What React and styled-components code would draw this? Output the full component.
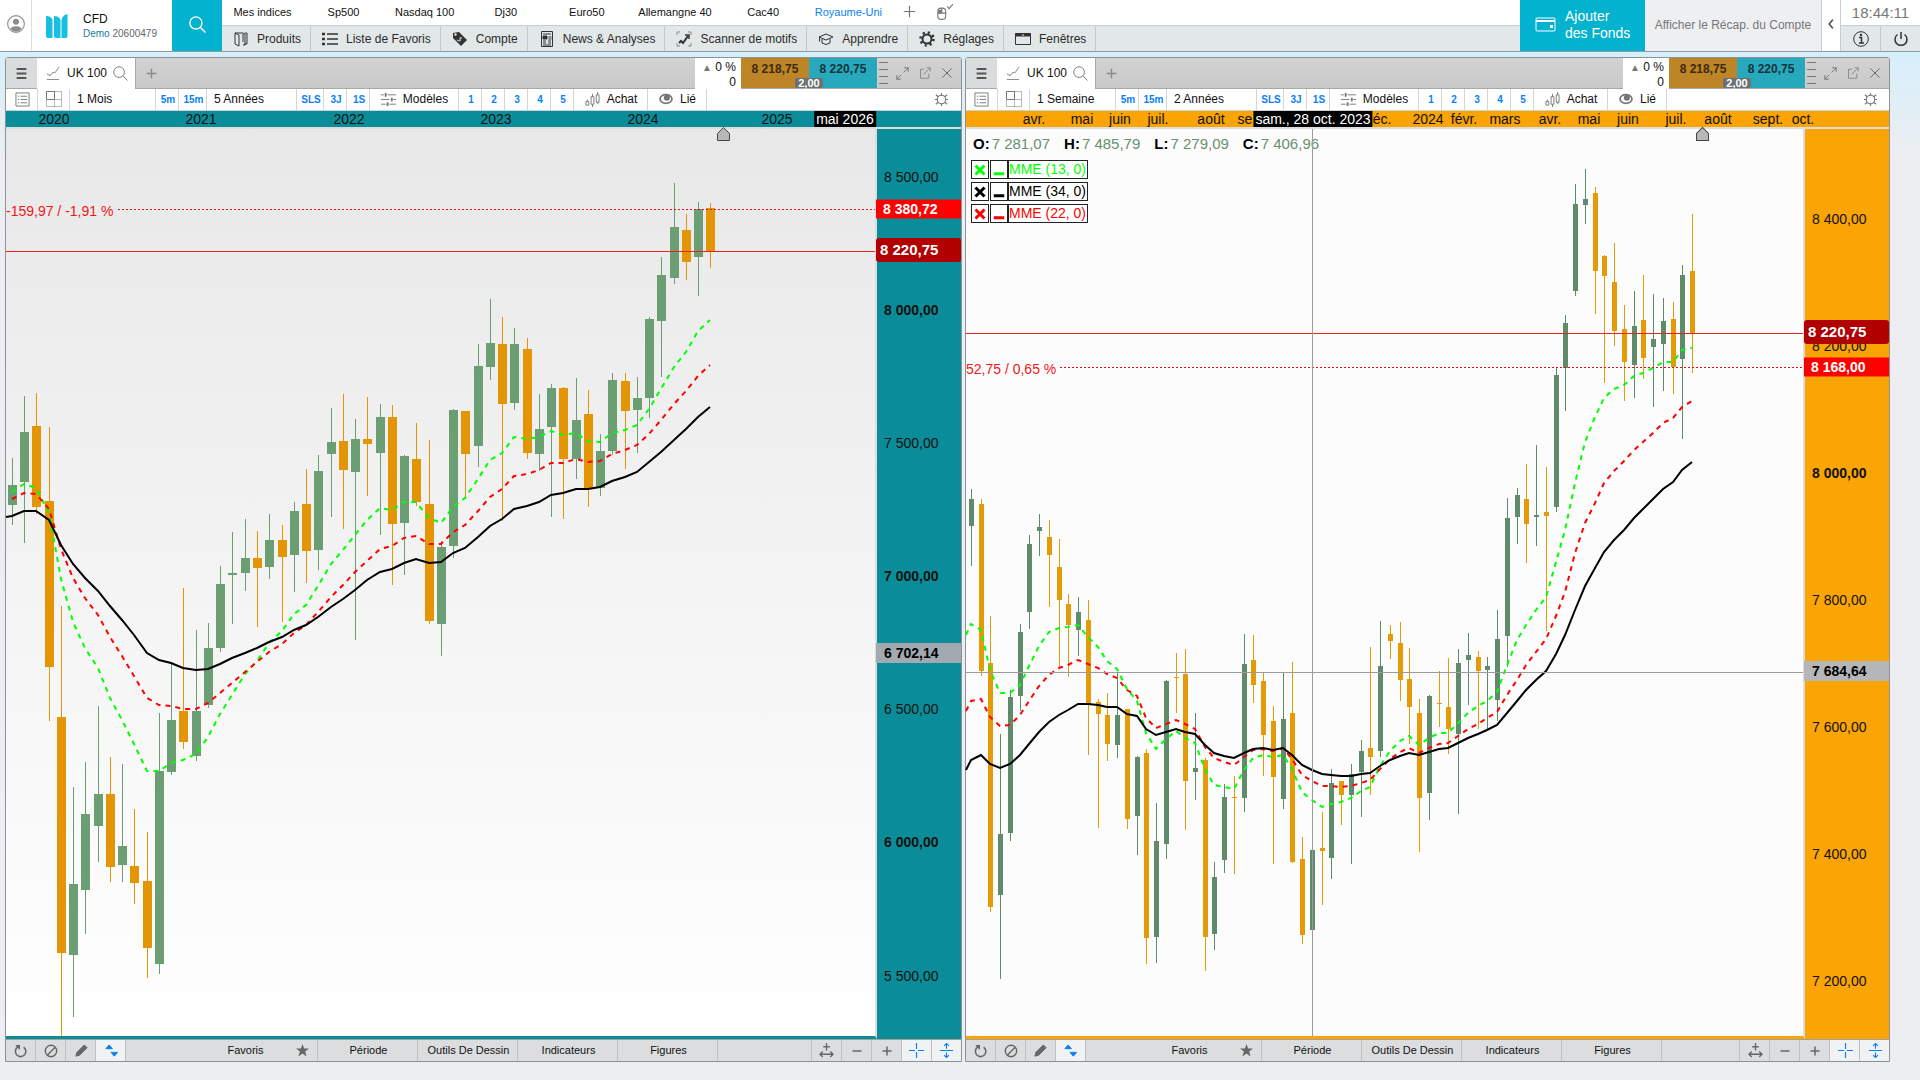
import React from 'react';
import styled, { createGlobalStyle } from 'styled-components';

const GlobalStyle = createGlobalStyle`
  * {
    box-sizing: border-box;
  }

  body {
    margin: 0;
    font-family: 'Liberation Sans', Arial, sans-serif;
    font-size: 12px;
    color: #111;
    background: #edeef1;
  }

  button {
    margin: 0;
    padding: 0;
    border: 0;
    background: none;
    font: inherit;
    color: inherit;
    cursor: pointer;
  }

  svg {
    display: block;
    flex: none;
  }
`;

const Page = styled.div`
  display: flex;
  flex-direction: column;
  min-height: 100vh;
  background: linear-gradient(#d6effa 50px, #edeef1 160px);
`;

/* header */

const Header = styled.header`
  display: flex;
  height: 52px;
  background: white;
  border-bottom: 1px solid #8f9aa3;
`;

const ProfileButton = styled.button`
  width: 32px;
  display: flex;
  align-items: center;
  justify-content: center;
  padding-bottom: 3px;
  border-right: 1px solid #ddd;
`;

const Brand = styled.div`
  width: 140px;
  display: flex;
  align-items: center;
  gap: 15px;
  padding-left: 14px;
`;

const AccountName = styled.div`
  line-height: 16px;

  small {
    display: block;
    font-size: 10px;
    line-height: 14px;
    color: #666;
  }

  em {
    font-style: normal;
    color: #16809a;
  }
`;

const SearchButton = styled.button`
  width: 50px;
  display: flex;
  align-items: center;
  justify-content: center;
  padding-bottom: 3px;
  background: #03b2ce;
`;

const Menus = styled.div`
  flex: 1;
  min-width: 0;
  display: flex;
  flex-direction: column;
`;

const QuickLinks = styled.nav`
  height: 26px;
  display: flex;
  align-items: center;
  padding-bottom: 2px;
  border-bottom: 1px solid #c9cccd;
`;

const QuickLink = styled.a`
  min-width: 81px;
  padding: 0 11px;
  font-size: 11px;
  text-align: center;
  white-space: nowrap;
  text-decoration: none;
  color: ${(props) => (props.$active ? '#0a7ff5' : '#111')};
`;

const QuickButton = styled.button`
  width: 34px;
  display: flex;
  justify-content: center;
`;

const MainMenu = styled.nav`
  flex: 1;
  display: flex;
  background: #e2e8e8;
`;

const MenuItem = styled.button`
  display: flex;
  align-items: center;
  gap: 8px;
  padding: 0 9px 0 11px;
  border-right: 1px solid #c3c8c9;
  white-space: nowrap;
  color: #2b2b2b;
`;

const FundsButton = styled.button`
  width: 125px;
  display: flex;
  align-items: center;
  gap: 9px;
  padding: 0 0 1px 15px;
  background: #03b2ce;
  color: white;
  font-size: 14px;
  line-height: 17px;
  text-align: left;
`;

const SummaryButton = styled.button`
  width: 176px;
  padding-bottom: 2px;
  background: #eeeff1;
  color: #777;
  white-space: nowrap;
`;

const CollapseButton = styled.button`
  width: 20px;
  display: flex;
  align-items: center;
  justify-content: center;
  padding-bottom: 3px;
  border-left: 1px solid #ccc;
  border-right: 1px solid #ccc;
`;

const ClockBlock = styled.div`
  width: 79px;
  display: flex;
  flex-direction: column;
`;

const Clock = styled.time`
  height: 26px;
  font-size: 15px;
  line-height: 26px;
  text-align: center;
  color: #777;
  border-bottom: 1px solid #c9cccd;
`;

const ClockButtons = styled.div`
  flex: 1;
  display: flex;
  background: #e2e8e8;

  button {
    flex: 1;
    display: flex;
    align-items: center;
    justify-content: center;
  }

  button + button {
    border-left: 1px solid #c3c8c9;
  }
`;

/* chart windows */

const Workspace = styled.main`
  flex: 1;
  display: flex;
  gap: 3px;
  padding: 5px 30px 18px 5px;
`;

const Panel = styled.section`
  flex: ${(props) => props.$grow} 1 0;
  min-width: 0;
  display: flex;
  flex-direction: column;
  border: 1px solid #8f9294;
  border-radius: 3px 3px 0 0;
  background: white;
`;

const TabBar = styled.div`
  height: 31px;
  display: flex;
  background: linear-gradient(#d2d2d2, #c9c9c9);
  border-bottom: 1px solid #a9a9a9;
  border-radius: 2px 2px 0 0;
`;

const BurgerButton = styled.button`
  width: 31px;
  display: flex;
  align-items: center;
  justify-content: center;
  background: #dadbdd;
`;

const Tab = styled.div`
  display: flex;
  align-items: center;
  gap: 7px;
  height: 31px;
  padding: 0 7px 1px 9px;
  background: white;
  border-right: 1px solid #a9a9a9;
`;

const TabName = styled.span`
  display: flex;
  align-items: center;
  gap: 6px;
`;

const AddTab = styled.button`
  width: 31px;
  display: flex;
  align-items: center;
  justify-content: center;
`;

const Spacer = styled.div`
  flex: 1;
`;

const Change = styled.div`
  width: 46px;
  height: 31px;
  padding: 2px 5px 0 0;
  background: white;
  text-align: right;
  line-height: 14px;

  i {
    font-style: normal;
    font-size: 10px;
    color: #777;
  }
`;

const Quotes = styled.div`
  position: relative;
  display: flex;
`;

const Quote = styled.button`
  width: 68px;
  padding-bottom: 9px;
  font-weight: bold;
  background: ${(props) => (props.$ask ? '#27a8bd' : '#bd8527')};
  color: ${(props) => (props.$ask ? '#12343c' : '#3d2a0c')};
`;

const Spread = styled.span`
  position: absolute;
  left: 50%;
  bottom: 0;
  transform: translateX(-50%);
  width: 28px;
  height: 10px;
  line-height: 10px;
  font-size: 11px;
  font-weight: bold;
  text-align: center;
  color: white;
  background: #6c6f73;
  border-radius: 2px;
`;

const WindowButtons = styled.div`
  display: flex;
  align-items: center;
  gap: 8px;
  padding: 0 8px 0 2px;

  button + button {
    margin-left: 2px;
  }
`;

const Toolbar = styled.div`
  height: 22px;
  display: flex;
  border-bottom: 1px solid #c9d3d6;
`;

const Tool = styled.button`
  width: ${(props) => props.$width}px;
  display: flex;
  align-items: center;
  justify-content: ${(props) => (props.$text ? 'flex-start' : 'center')};
  gap: 7px;
  padding-left: ${(props) => (props.$text ? 7 : 1)}px;
  padding-bottom: 1px;
  border-right: 1px solid #d5d5d5;
  white-space: nowrap;
`;

const Shortcut = styled(Tool)`
  padding-left: 2px;
  font-size: 10px;
  font-weight: bold;
  color: #0a7ff5;
`;

const GearButton = styled.button`
  width: 38px;
  display: flex;
  align-items: center;
  justify-content: center;
`;

const DateAxis = styled.div`
  position: relative;
  height: 16px;
  overflow: hidden;
  background: ${(props) => props.$color};
`;

const DateLabel = styled.span`
  position: absolute;
  top: 0;
  transform: translateX(-50%);
  font-size: 14px;
  line-height: 16px;
  white-space: nowrap;
`;

const DateChip = styled(DateLabel)`
  padding: 0 2px;
  color: white;
  background: black;
`;

const Body = styled.div`
  flex: 1;
  min-height: 600px;
  display: flex;
  border-top: 2px solid #dcdddf;
`;

const Plot = styled.div`
  position: relative;
  flex: 1;
  min-width: 0;
  background: ${(props) => props.$background};
  border-right: 2px solid #dcdddf;
  border-bottom: 3px solid ${(props) => props.$color};
`;

const ChartSvg = styled.svg`
  position: absolute;
  inset: 0;
  width: 100%;
  height: 100%;
  overflow: visible;
`;

const Variation = styled.span`
  position: absolute;
  left: 0;
  transform: translateY(-50%);
  font-size: 14px;
  line-height: 16px;
  color: #f01818;
`;

const PriceAxis = styled.div`
  position: relative;
  width: 84px;
  background: ${(props) => props.$color};
`;

const PriceLabel = styled.span`
  position: absolute;
  left: 7px;
  transform: translateY(-50%);
  font-size: 14px;
  line-height: 18px;
  font-weight: ${(props) => (props.$bold ? 'bold' : 'normal')};
`;

const chips = {
  current: { background: '#b00000', color: 'white', size: 15, height: 24, pad: 4 },
  order: { background: '#ff0000', color: 'white', size: 14, height: 19, pad: 7 },
  cursor: { background: '#a2a9b1', color: 'black', size: 14, height: 20, pad: 8 },
  cursorLight: { background: '#b5b6b8', color: 'black', size: 14, height: 20, pad: 8 },
};

const PriceChip = styled.span`
  position: absolute;
  left: -1px;
  right: 0;
  transform: translateY(-50%);
  height: ${(props) => chips[props.$kind].height}px;
  line-height: ${(props) => chips[props.$kind].height}px;
  padding-left: ${(props) => chips[props.$kind].pad}px;
  font-size: ${(props) => chips[props.$kind].size}px;
  font-weight: bold;
  color: ${(props) => chips[props.$kind].color};
  background: ${(props) => chips[props.$kind].background};
  border-radius: ${(props) => (props.$kind === 'current' ? 3 : 0)}px;
`;

const Overlay = styled.div`
  position: absolute;
  top: 6px;
  left: 5px;
`;

const Ohlc = styled.div`
  display: flex;
  gap: 14px;
  padding-left: 2px;
  margin-bottom: 7px;
  font-size: 15px;
  line-height: 18px;
  color: #67916f;
  white-space: nowrap;

  b {
    margin-right: 2px;
    color: black;
  }
`;

const Legend = styled.div`
  display: flex;
  align-items: stretch;
  height: 19px;
  margin-bottom: 3px;
  font-size: 14px;
  color: ${(props) => props.$color};

  button {
    width: 18px;
    margin-right: 1px;
    border: 1px solid #222;
    background: white;
    display: flex;
    align-items: center;
    justify-content: center;
  }

  button + button {
    margin-right: 0;
  }

  span {
    line-height: 17px;
    padding-right: 1px;
    border: 1px solid #222;
    background: white;
  }
`;

const BottomBar = styled.div`
  height: 22px;
  display: flex;
  background: #dcdddf;
  border-top: 1px solid #9fa1a3;
`;

const BottomIcon = styled.button`
  width: 30px;
  display: flex;
  align-items: center;
  justify-content: center;
  padding-left: 1px;
  border-right: 1px solid #bfc0c2;
  color: ${(props) => (props.$on ? '#0a7ff5' : '#666')};
  background: ${(props) => (props.$on ? '#f1f2f4' : 'none')};
`;

const BottomTabs = styled.div`
  flex: 1;
  display: flex;
  justify-content: center;
`;

const BottomTab = styled.button`
  width: 100px;
  display: flex;
  align-items: center;
  justify-content: ${(props) => (props.$star ? 'space-between' : 'center')};
  padding: ${(props) => (props.$star ? '0 8px 1px 9px' : '0 0 1px 1px')};
  border-right: 1px solid #bfc0c2;
  font-size: 11px;
  white-space: nowrap;
`;

const RightIcons = styled.div`
  display: flex;

  ${BottomIcon} {
    border-right: 0;
    border-left: 1px solid #bfc0c2;
  }
`;

/* icons */

const Icon = ({ size = 16, children, color = 'currentColor', width = 1 }) => (
  <svg
    width={size}
    height={size}
    viewBox="0 0 16 16"
    fill="none"
    stroke={color}
    strokeWidth={width}
    aria-hidden="true"
  >
    {children}
  </svg>
);

const SearchIcon = ({ size, color, width }) => (
  <Icon size={size} color={color} width={width}>
    <circle cx="6.500" cy="6.500" r="5.700" />
    <path d="M10.500 10.500L15.500 15.500" />
  </Icon>
);

const PlusIcon = ({ size = 12, color = '#777', width = 1.5 }) => (
  <Icon size={size} color={color} width={width}>
    <path d="M8 1v14M1 8h14" />
  </Icon>
);

const ProfileIcon = () => (
  <Icon size={18} color="#8a8c90">
    <circle cx="8" cy="8" r="7.400" />
    <circle cx="8" cy="6" r="2.700" fill="#8a8c90" stroke="none" />
    <path d="M3 12.200q1-2.200 5-2.200t5 2.200q-2 2.600-5 2.600t-5-2.600z" fill="#8a8c90" stroke="none" />
  </Icon>
);

const LogoIcon = () => (
  <svg width="22" height="26" viewBox="0 0 22 26" fill="#17bfe0" aria-hidden="true">
    <path d="M0 3q5 0 6.500 4v18H2q-2 0-2-2z" />
    <path d="M8 3q5 0 6.500 4v18H10q-2 0-2-2z" />
    <path d="M15.500 7q1-5 6-6v22q0 2-2 2h-4z" />
  </svg>
);

const menuIcons = {
  Produits: (
    <Icon color="#333">
      <path d="M2 2h8l2 1v11H10M2 2v11l4 2V4L2 2M12 2h2v11h-3M10 3v8" />
    </Icon>
  ),
  'Liste de Favoris': (
    <Icon color="#333" width={1.5}>
      <path d="M5 3h11M5 8h11M5 13h11" />
      <path d="M0 3h3M0 8h3M0 13h3" strokeWidth="2.500" />
    </Icon>
  ),
  Compte: (
    <Icon color="none">
      <path d="M1 2l6-1 8 8-6 6-8-8z" fill="#333" />
      <circle cx="3.500" cy="3.500" r="1.200" fill="#e2e8e8" />
      <path d="M10 7q-3-1-2 1t0 2-3-1" stroke="#e2e8e8" />
    </Icon>
  ),
  'News & Analyses': (
    <Icon color="#333">
      <path d="M2.500 .5h11v15h-11z" />
      <path d="M4 3h8M4 10h3M9 10h3M4 12h3M9 12h3M4 14h8" />
      <path d="M4 5h4v3H4z" fill="#333" />
      <path d="M9.500 6h3M9.500 8h3" />
    </Icon>
  ),
  'Scanner de motifs': (
    <Icon color="#333">
      <path d="M1 4V1h3M12 1h3v3M1 12v3h3M12 15h3v-3" stroke="#888" />
      <path d="M3 12l2-2 2 2 5-7" strokeWidth="2" />
      <path d="M9 4h4v4" strokeWidth="1.500" />
    </Icon>
  ),
  Apprendre: (
    <Icon color="#333">
      <path d="M1 6l7-3 7 3-7 3zM4 8v4q4 3 8 0V8M1.500 6.500v4" />
    </Icon>
  ),
  Réglages: (
    <Icon color="#333" width={2}>
      <circle cx="8" cy="8" r="4.500" />
      <circle cx="8" cy="8" r="6.500" strokeWidth="2.500" strokeDasharray="2.100 3" />
    </Icon>
  ),
  Fenêtres: (
    <Icon color="#333">
      <path d="M.5 2.500h15v11H.5z" />
      <path d="M0 4h16" strokeWidth="3" />
      <path d="M7 4h2" stroke="#e2e8e8" />
    </Icon>
  ),
};

const MouseIcon = () => (
  <Icon size={18} color="#777">
    <rect x="2.500" y="4.500" width="7" height="10" rx="3" />
    <path d="M2.500 9h7M6 4.500V9M11 3l1.500 2L16 1" />
    <path d="M3 6h3v3H3z" fill="#777" stroke="none" />
  </Icon>
);

const WalletIcon = () => (
  <svg width="21" height="16" viewBox="0 0 21 16" fill="none" stroke="white" aria-hidden="true">
    <rect x="1" y="1" width="19" height="13" rx="1" />
    <path d="M1 4h19" strokeWidth="2" />
    <path d="M15 8h3v3h-3z" fill="white" stroke="none" />
  </svg>
);

const TrendIcon = () => (
  <Icon size={14} color="#777">
    <path d="M1 9l4 2 3-4 2 1 5-7M1 15.500h14" />
  </Icon>
);

const ListIcon = () => (
  <Icon size={15} color="#777">
    <path d="M1 1h14v14H1zM6 4.500h7M6 8h7M6 11.500h7M3 4.500h1.500M3 8h1.500M3 11.500h1.500" />
  </Icon>
);

const GridIcon = () => (
  <Icon size={16} color="#777">
    <path d="M.5 .5h8v8h-8z" />
    <path d="M8.500 .5h7v15H.5V8.500M8.500 8.500h7M8.500 8.500v7" strokeDasharray="1 1" />
  </Icon>
);

const SlidersIcon = () => (
  <Icon size={15} color="#777">
    <path d="M0 3h3M7 3h9M0 8h9M13 8h3M0 13h5M9 13h7" />
    <path d="M5 1v4M11.500 6v4M7 11v4" strokeWidth="2" />
  </Icon>
);

const CandlesIcon = () => (
  <Icon size={15} color="#777">
    <path d="M1 10h3v4H1zM6.500 5h3v8h-3zM12 3h3v8h-3zM8 2v3M8 13v3M13.500 0v3M13.500 11v2M2.500 8v2" />
  </Icon>
);

const EyeIcon = () => (
  <Icon size={14} color="#777" width={2}>
    <ellipse cx="8" cy="8" rx="6.800" ry="5" />
    <circle cx="9" cy="6.500" r="2.500" fill="#777" />
  </Icon>
);

const GearIcon = () => (
  <Icon size={15} color="#777" width={1.2}>
    <circle cx="8" cy="8" r="4.500" />
    <path d="M8 1v2.500M8 12.500V15M2 3l2.500 2M14 3l-2.500 2M2 13l2.500-2M14 13l-2.500-2M1 8h2.500M12.500 8H15" />
  </Icon>
);

const bottomIcons = {
  reload: (
    <Icon size={14} width={1.8}>
      <path d="M11 3.500a6 6 0 1 1-6-.5M2 2h4v4" />
    </Icon>
  ),
  forbid: (
    <Icon size={14} width={1.6}>
      <circle cx="8" cy="8" r="6.500" />
      <path d="M4 12.500L12.500 4" />
    </Icon>
  ),
  pencil: (
    <Icon size={15}>
      <path d="M2 14l1-4 8-8 3 3-8 8z" fill="currentColor" />
    </Icon>
  ),
  updown: (
    <Icon size={15}>
      <path d="M2 6l3.500-4L9 6zM7.500 10h7L11 14z" fill="currentColor" />
    </Icon>
  ),
  expandX: (
    <Icon size={15} width={1.4}>
      <path d="M8 0v8M4.500 4h7M1 12h14M4 9l-3 3 3 3M12 9l3 3-3 3" />
    </Icon>
  ),
  minus: (
    <Icon size={12} width={2}>
      <path d="M2 8h12" />
    </Icon>
  ),
  plus: (
    <Icon size={12} width={2}>
      <path d="M8 2v12M2 8h12" />
    </Icon>
  ),
  cross: (
    <Icon size={15} width={1.2}>
      <path d="M8 0v6.500M8 9.500V16M0 8h6.500M9.500 8H16" />
    </Icon>
  ),
  expandY: (
    <Icon size={15} width={1.2}>
      <path d="M1 8h14M8 0v6M8 10v6M5.500 3L8 .5 10.500 3M5.500 13L8 15.500l2.500-2.500" />
    </Icon>
  ),
};

/* data: each candle is [high, body top, body bottom, low, 1 when rising] */

const monthly = {
  id: 'monthly',
  grow: 957,
  period: '1 Mois',
  range: '5 Années',
  color: '#0a8d99',
  background: 'linear-gradient(#e8e8e8, #f6f6f6 60%, #ffffff)',
  up: '#6b9f73',
  down: '#e49505',
  view: [6, 129, 869, 907],
  first: 12,
  step: 12.255,
  shift: 0.4,
  half: 4,
  dates: [
    ['2020', 54], ['2021', 201], ['2022', 349], ['2023', 496], ['2024', 643], ['2025', 777],
  ],
  dateCursor: ['mai 2026', 845],
  prices: [
    ['8 500,00', 177], ['8 000,00', 310], ['7 500,00', 443], ['7 000,00', 576],
    ['6 500,00', 709], ['6 000,00', 842], ['5 500,00', 976],
  ],
  chips: [
    ['order', '8 380,72', 209], ['current', '8 220,75', 250], ['cursor', '6 702,14', 653],
  ],
  priceLine: 251,
  orderLine: [118, 209],
  variation: ['-159,97 / -1,91 %', 211],
  marker: 723,
  candles: [
    [458, 485, 505, 525, 1], [396, 432, 482, 543, 1], [393, 426, 507, 514, 0],
    [427, 501, 667, 721, 0], [606, 717, 953, 1036, 0], [787, 884, 955, 1017, 1],
    [762, 814, 890, 934, 1], [706, 794, 826, 862, 1], [757, 794, 867, 882, 0],
    [764, 846, 865, 882, 1], [809, 866, 883, 904, 0], [832, 881, 948, 978, 0],
    [713, 771, 964, 974, 1], [663, 720, 772, 775, 1], [588, 711, 742, 749, 0],
    [630, 711, 756, 761, 1], [623, 648, 705, 708, 1], [566, 584, 648, 652, 1],
    [532, 573, 575, 624, 1], [519, 558, 573, 591, 1], [531, 558, 568, 627, 0],
    [514, 540, 567, 579, 1], [525, 540, 557, 622, 0], [502, 511, 555, 592, 1],
    [469, 504, 551, 583, 0], [455, 471, 550, 570, 1], [408, 442, 454, 517, 1],
    [394, 441, 470, 529, 0], [419, 439, 472, 640, 1], [397, 439, 444, 496, 0],
    [404, 417, 453, 535, 1], [405, 417, 524, 585, 0], [455, 456, 523, 575, 1],
    [423, 459, 502, 506, 0], [440, 504, 621, 624, 0], [541, 547, 624, 656, 1],
    [409, 410, 546, 558, 1], [411, 411, 454, 497, 0], [344, 366, 446, 467, 1],
    [299, 343, 367, 380, 1], [317, 344, 404, 521, 0], [328, 344, 403, 410, 1],
    [338, 349, 453, 459, 0], [394, 429, 454, 471, 1], [384, 388, 427, 517, 1],
    [387, 388, 459, 519, 0], [378, 420, 459, 479, 1], [390, 414, 488, 507, 0],
    [434, 451, 488, 496, 1], [373, 380, 451, 455, 1], [373, 381, 411, 469, 0],
    [377, 398, 410, 453, 1], [317, 319, 398, 418, 1], [257, 275, 321, 377, 1],
    [183, 227, 278, 284, 1], [214, 230, 262, 280, 0], [202, 209, 257, 296, 1],
    [203, 208, 251, 268, 0],
  ],
  averages: [
    {
      color: '#00ff00',
      dash: '5 5',
      values: [
        492, 484, 488, 513, 579, 622, 648, 668, 698, 720, 744, 771, 771, 763, 760, 754, 737, 714,
        695, 674, 661, 643, 631, 614, 605, 586, 564, 550, 535, 520, 508, 510, 502, 502, 518, 523,
        507, 498, 479, 460, 453, 437, 439, 437, 431, 435, 433, 441, 442, 433, 430, 425, 409, 389,
        367, 352, 331, 320,
      ],
    },
    {
      color: '#ff0000',
      dash: '5 5',
      values: [
        499, 493, 494, 509, 549, 578, 598, 615, 637, 656, 676, 698, 705, 706, 709, 709, 703, 693,
        683, 672, 662, 652, 644, 633, 625, 612, 597, 585, 572, 561, 549, 546, 538, 536, 544, 544,
        532, 525, 511, 497, 489, 476, 474, 470, 463, 463, 459, 462, 461, 454, 450, 445, 434, 420,
        404, 391, 376, 365,
      ],
    },
    {
      color: '#000000',
      start: 517,
      values: [
        516, 511, 511, 520, 545, 564, 578, 591, 606, 620, 635, 653, 660, 663, 668, 670, 669, 664,
        658, 653, 648, 642, 637, 630, 625, 617, 607, 599, 590, 580, 572, 569, 563, 559, 563, 562,
        553, 548, 537, 526, 519, 509, 506, 502, 495, 493, 489, 489, 487, 481, 477, 472, 462, 452,
        440, 429, 417, 407,
      ],
    },
  ],
};

const weekly = {
  id: 'weekly',
  grow: 925,
  period: '1 Semaine',
  range: '2 Années',
  color: '#faa406',
  background: '#fcfcfc',
  up: '#5f8b6b',
  down: '#e59a07',
  view: [966, 129, 837, 907],
  first: 971,
  step: 9.7475,
  shift: 0.304,
  half: 2,
  dates: [
    ['avr.', 1034], ['mai', 1082], ['juin', 1120], ['juil.', 1158], ['août', 1211],
    ['se', 1245], ['éc.', 1382], ['2024', 1428], ['févr.', 1464], ['mars', 1505],
    ['avr.', 1550], ['mai', 1589], ['juin', 1628], ['juil.', 1676], ['août', 1718],
    ['sept.', 1768], ['oct.', 1803],
  ],
  dateCursor: ['sam., 28 oct. 2023', 1313],
  prices: [
    ['8 400,00', 219], ['8 200,00', 346], ['8 000,00', 473], ['7 800,00', 600],
    ['7 600,00', 727], ['7 400,00', 854], ['7 200,00', 981],
  ],
  chips: [
    ['current', '8 220,75', 332], ['order', '8 168,00', 367], ['cursorLight', '7 684,64', 671],
  ],
  priceLine: 333,
  orderLine: [1060, 367],
  variation: ['52,75 / 0,65 %', 369],
  marker: 1702,
  cursor: [1312, 672],
  ohlc: [['O', '7 281,07'], ['H', '7 485,79'], ['L', '7 279,09'], ['C', '7 406,96']],
  legends: [['MME (13, 0)', '#00ff00'], ['MME (34, 0)', '#000000'], ['MME (22, 0)', '#ff0000']],
  candles: [
    [489, 499, 526, 566, 1], [499, 504, 671, 676, 0], [616, 663, 907, 912, 0],
    [734, 834, 895, 979, 1], [690, 697, 833, 841, 1], [624, 632, 696, 711, 1],
    [535, 544, 612, 629, 1], [514, 527, 531, 556, 1], [520, 537, 555, 607, 0],
    [539, 567, 600, 668, 0], [594, 604, 625, 677, 0], [597, 612, 630, 656, 1],
    [600, 620, 704, 755, 0], [699, 702, 714, 828, 0], [693, 715, 744, 761, 0],
    [672, 715, 745, 758, 1], [709, 709, 819, 829, 0], [756, 757, 816, 855, 1],
    [749, 753, 938, 964, 0], [803, 841, 937, 963, 1], [680, 681, 844, 859, 1],
    [653, 677, 678, 713, 0], [649, 674, 781, 830, 0], [713, 768, 772, 800, 1],
    [758, 760, 937, 971, 0], [862, 877, 934, 950, 1], [784, 797, 860, 873, 1],
    [776, 797, 798, 874, 0], [634, 664, 798, 812, 1], [635, 660, 685, 703, 0],
    [672, 681, 735, 776, 0], [706, 721, 777, 864, 0], [672, 719, 799, 809, 1],
    [662, 713, 862, 863, 0], [837, 859, 935, 944, 0], [850, 850, 930, 930, 1],
    [812, 848, 851, 905, 0], [769, 783, 858, 879, 1], [781, 781, 795, 825, 0],
    [764, 774, 795, 864, 1], [740, 751, 772, 817, 1], [647, 748, 757, 795, 0],
    [621, 666, 751, 757, 1], [625, 634, 641, 659, 0], [622, 643, 680, 701, 0],
    [648, 679, 707, 744, 0], [699, 713, 798, 852, 0], [695, 696, 793, 820, 1],
    [671, 703, 704, 727, 0], [658, 707, 729, 754, 0], [649, 663, 734, 814, 1],
    [633, 655, 660, 705, 1], [651, 657, 671, 729, 0], [657, 666, 670, 730, 1],
    [610, 639, 700, 721, 1], [498, 518, 636, 667, 1], [488, 495, 517, 544, 1],
    [464, 499, 524, 563, 0], [445, 515, 517, 546, 1], [467, 512, 516, 631, 0],
    [368, 375, 507, 512, 1], [315, 323, 368, 411, 1], [184, 204, 291, 296, 1],
    [169, 199, 205, 224, 1], [187, 193, 271, 314, 0], [255, 256, 276, 383, 0],
    [243, 282, 331, 346, 0], [305, 329, 362, 401, 0], [291, 326, 365, 398, 1],
    [275, 320, 358, 379, 0], [294, 339, 347, 407, 1], [298, 321, 344, 391, 1],
    [302, 319, 367, 394, 0], [265, 275, 359, 439, 1], [214, 271, 334, 373, 0],
  ],
  averages: [
    {
      color: '#00ff00',
      dash: '5 5',
      start: 635,
      values: [
        624, 630, 670, 693, 693, 685, 666, 646, 632, 628, 627, 625, 637, 647, 661, 669, 689, 701,
        733, 749, 739, 731, 738, 743, 769, 785, 787, 789, 770, 758, 755, 757, 755, 769, 792, 800,
        807, 804, 802, 798, 791, 787, 766, 751, 741, 736, 745, 738, 733, 733, 723, 713, 706, 701,
        692, 665, 640, 625, 610, 597, 562, 530, 483, 442, 417, 398, 389, 385, 376, 373, 368, 362,
        362, 350, 348,
      ],
    },
    {
      color: '#ff0000',
      dash: '5 5',
      start: 711,
      values: [
        701, 699, 717, 726, 725, 715, 701, 686, 675, 668, 665, 660, 664, 668, 674, 678, 690, 696,
        718, 728, 724, 720, 724, 729, 747, 758, 762, 765, 757, 750, 749, 751, 748, 759, 775, 781,
        786, 786, 787, 786, 783, 780, 769, 759, 752, 748, 753, 748, 744, 743, 736, 729, 724, 718,
        712, 695, 680, 665, 652, 639, 616, 592, 553, 523, 503, 483, 471, 461, 450, 442, 433, 423,
        418, 407, 401,
      ],
    },
    {
      color: '#000000',
      start: 770,
      values: [
        760, 755, 764, 768, 764, 755, 744, 732, 722, 715, 710, 704, 704, 705, 707, 707, 714, 716,
        729, 735, 732, 729, 732, 734, 745, 753, 756, 758, 753, 749, 748, 750, 748, 755, 765, 770,
        774, 775, 776, 776, 774, 773, 766, 760, 756, 753, 755, 752, 749, 748, 743, 738, 734, 730,
        725, 713, 701, 690, 680, 671, 654, 635, 610, 586, 568, 552, 540, 530, 518, 509, 499, 489,
        482, 470, 462,
      ],
    },
  ],
};

const Chart = ({ data }) => {
  const [left, top, width, height] = data.view;
  const right = left + width;
  const xOf = (i) => data.first + Math.floor(i * data.step + data.shift);

  const points = (average) => {
    const list = average.values.map((y, i) => `${xOf(i)},${y}`);
    if (average.start) list.unshift(`${left},${average.start}`);
    return list.join(' ');
  };

  return (
    <ChartSvg viewBox={data.view.join(' ')} preserveAspectRatio="none" role="img" aria-label="UK 100">
      {data.candles.map(([high, open, close, low, rising], i) => {
        const x = xOf(i);
        return (
          <g key={i} fill={rising ? data.up : data.down} shapeRendering="crispEdges">
            <rect x={x} y={high} width="1" height={low - high} />
            <rect x={x - data.half} y={open} width={data.half * 2 + 1} height={close - open} />
          </g>
        );
      })}
      {data.averages.map((average) => (
        <polyline
          key={average.color}
          points={points(average)}
          fill="none"
          stroke={average.color}
          strokeWidth="2"
          strokeDasharray={average.dash}
        />
      ))}
      <g fill="none" shapeRendering="crispEdges">
        <path d={`M${left} ${data.priceLine + 0.5}H${right}`} stroke="#e8231a" />
        <path
          d={`M${data.orderLine[0]} ${data.orderLine[1] + 0.5}H${right}`}
          stroke="#e01010"
          strokeDasharray="2 2"
        />
        {data.cursor && (
          <path
            d={`M${left} ${data.cursor[1] + 0.5}H${right}M${data.cursor[0] + 0.5} ${top}V${top + height}`}
            stroke="#9c9c9c"
          />
        )}
      </g>
      <path
        d={`M${data.marker - 5.5} 140.500v-7l6-6 6 6v7z`}
        fill="#b8b8b8"
        stroke="#444"
      />
    </ChartSvg>
  );
};

const ChartPanel = ({ data }) => {
  const [left, top, width] = data.view;
  const axisWidth = width + 86;
  const dateLeft = (x) => ({ left: `${((x - left) / axisWidth) * 100}%` });
  const priceTop = (y) => ({ top: `${((y - top) / 910) * 100}%` });
  const plotTop = (y) => ({ top: `${((y - top) / 907) * 100}%` });

  return (
    <Panel $grow={data.grow}>
      <TabBar>
        <BurgerButton aria-label="Menu">
          <Icon size={13} color="#555" width={2.5}>
            <path d="M2 2.500h12M2 8h12M2 13.500h12" />
          </Icon>
        </BurgerButton>
        <Tab>
          <TrendIcon />
          <TabName>
            UK 100
            <SearchIcon size={15} color="#777" />
          </TabName>
        </Tab>
        <AddTab aria-label="Ajouter un onglet">
          <PlusIcon size={11} color="#888" width={2} />
        </AddTab>
        <Spacer />
        <Change>
          <i>▲</i> 0 %<br />0
        </Change>
        <Quotes>
          <Quote>8 218,75</Quote>
          <Quote $ask>8 220,75</Quote>
          <Spread>2,00</Spread>
        </Quotes>
        <WindowButtons>
          <svg width="9" height="26" viewBox="0 0 9 26" stroke="#777" aria-hidden="true">
            <path d="M0 2.500h9M0 9.500h9M0 16.500h9M0 23.500h9" />
          </svg>
          <button aria-label="Agrandir">
            <Icon size={13} color="#666">
              <path d="M10 1h5v5M15 1L9.500 6.500M1 10v5h5M1 15l5.500-5.500" />
            </Icon>
          </button>
          <button aria-label="Détacher">
            <Icon size={12} color="#777">
              <path d="M7 3H2v12h11V9M6 10l8-8M10 1h5v5" />
            </Icon>
          </button>
          <button aria-label="Fermer">
            <Icon size={12} color="#666" width={1.3}>
              <path d="M2 2l12 12M14 2L2 14" />
            </Icon>
          </button>
        </WindowButtons>
      </TabBar>

      <Toolbar>
        <Tool $width={32} aria-label="Liste"><ListIcon /></Tool>
        <Tool $width={32} aria-label="Disposition"><GridIcon /></Tool>
        <Tool $width={86} $text>{data.period}</Tool>
        <Shortcut $width={23}>5m</Shortcut>
        <Shortcut $width={28}>15m</Shortcut>
        <Tool $width={90} $text>{data.range}</Tool>
        <Shortcut $width={27}>SLS</Shortcut>
        <Shortcut $width={23}>3J</Shortcut>
        <Shortcut $width={23}>1S</Shortcut>
        <Tool $width={89}><SlidersIcon />Modèles</Tool>
        {[1, 2, 3, 4, 5].map((n) => (
          <Shortcut key={n} $width={23}>{n}</Shortcut>
        ))}
        <Tool $width={74}><CandlesIcon />Achat</Tool>
        <Tool $width={59}><EyeIcon />Lié</Tool>
        <Spacer />
        <GearButton aria-label="Paramètres"><GearIcon /></GearButton>
      </Toolbar>

      <DateAxis $color={data.color}>
        {data.dates.map(([label, x]) => (
          <DateLabel key={x} style={dateLeft(x)}>{label}</DateLabel>
        ))}
        <DateChip style={dateLeft(data.dateCursor[1])}>{data.dateCursor[0]}</DateChip>
      </DateAxis>

      <Body>
        <Plot $background={data.background} $color={data.color}>
          {data.ohlc && (
            <Overlay>
              <Ohlc>
                {data.ohlc.map(([name, value]) => (
                  <span key={name}><b>{name}:</b>{value}</span>
                ))}
              </Ohlc>
              {data.legends.map(([label, color]) => (
                <Legend key={label} $color={color}>
                  <button aria-label={`Supprimer ${label}`}>
                    <Icon size={12} width={4}>
                      <path d="M2 2l12 12M14 2L2 14" />
                    </Icon>
                  </button>
                  <button aria-label={`Réduire ${label}`}>
                    <Icon size={12} width={4}>
                      <path d="M1 13h14" />
                    </Icon>
                  </button>
                  <span>{label}</span>
                </Legend>
              ))}
            </Overlay>
          )}
          <Chart data={data} />
          <Variation style={plotTop(data.variation[1])}>{data.variation[0]}</Variation>
        </Plot>
        <PriceAxis $color={data.color}>
          {data.prices.map(([label, y]) => (
            <PriceLabel key={label} $bold={label.endsWith(' 000,00')} style={priceTop(y)}>
              {label}
            </PriceLabel>
          ))}
          {data.chips.map(([kind, label, y]) => (
            <PriceChip key={kind} $kind={kind} style={priceTop(y)}>{label}</PriceChip>
          ))}
        </PriceAxis>
      </Body>

      <BottomBar>
        <BottomIcon aria-label="Actualiser">{bottomIcons.reload}</BottomIcon>
        <BottomIcon aria-label="Effacer">{bottomIcons.forbid}</BottomIcon>
        <BottomIcon aria-label="Dessiner">{bottomIcons.pencil}</BottomIcon>
        <BottomIcon $on aria-label="Défiler">{bottomIcons.updown}</BottomIcon>
        <BottomTabs>
          <BottomTab $star>
            Favoris
            <Icon size={13} color="none">
              <path
                d="M8 0l2 5.600h6l-4.800 3.700L13 15.500 8 11.800 3 15.500l1.800-6.200L0 5.600h6z"
                fill="#666"
              />
            </Icon>
          </BottomTab>
          <BottomTab>Période</BottomTab>
          <BottomTab>Outils De Dessin</BottomTab>
          <BottomTab>Indicateurs</BottomTab>
          <BottomTab>Figures</BottomTab>
        </BottomTabs>
        <RightIcons>
          <BottomIcon aria-label="Ajuster">{bottomIcons.expandX}</BottomIcon>
          <BottomIcon aria-label="Zoom arrière">{bottomIcons.minus}</BottomIcon>
          <BottomIcon aria-label="Zoom avant">{bottomIcons.plus}</BottomIcon>
          <BottomIcon $on aria-label="Réticule">{bottomIcons.cross}</BottomIcon>
          <BottomIcon $on aria-label="Échelle">{bottomIcons.expandY}</BottomIcon>
        </RightIcons>
      </BottomBar>
    </Panel>
  );
};

const quickLinks = [
  'Mes indices', 'Sp500', 'Nasdaq 100', 'Dj30', 'Euro50', 'Allemangne 40', 'Cac40', 'Royaume-Uni',
];

const App = () => (
  <Page>
    <GlobalStyle />
    <Header>
      <ProfileButton aria-label="Profil"><ProfileIcon /></ProfileButton>
      <Brand>
        <LogoIcon />
        <AccountName>
          CFD
          <small><em>Demo</em> 20600479</small>
        </AccountName>
      </Brand>
      <SearchButton aria-label="Rechercher">
        <SearchIcon size={17} color="white" width={1.3} />
      </SearchButton>
      <Menus>
        <QuickLinks>
          {quickLinks.map((label) => (
            <QuickLink key={label} href="#" $active={label === 'Royaume-Uni'}>{label}</QuickLink>
          ))}
          <QuickButton aria-label="Ajouter"><PlusIcon size={13} /></QuickButton>
          <QuickButton aria-label="Mode souris"><MouseIcon /></QuickButton>
        </QuickLinks>
        <MainMenu>
          {Object.keys(menuIcons).map((label) => (
            <MenuItem key={label}>
              {menuIcons[label]}
              {label}
            </MenuItem>
          ))}
        </MainMenu>
      </Menus>
      <FundsButton>
        <WalletIcon />
        <span>Ajouter<br />des Fonds</span>
      </FundsButton>
      <SummaryButton>Afficher le Récap. du Compte</SummaryButton>
      <CollapseButton aria-label="Réduire">
        <Icon size={10} color="#555" width={2.5}>
          <path d="M11 1L5 8l6 7" />
        </Icon>
      </CollapseButton>
      <ClockBlock>
        <Clock>18:44:11</Clock>
        <ClockButtons>
          <button aria-label="Informations">
            <Icon color="#333">
              <circle cx="8" cy="8" r="7.300" />
              <path d="M6 6.500h2.500V12M6 12h5" strokeWidth="1.500" />
              <circle cx="8" cy="4" r="1.200" fill="#333" stroke="none" />
            </Icon>
          </button>
          <button aria-label="Déconnexion">
            <Icon color="#333" width={1.5}>
              <path d="M8 1v7M4.500 3.500a6 6 0 1 0 7 0" />
            </Icon>
          </button>
        </ClockButtons>
      </ClockBlock>
    </Header>
    <Workspace>
      <ChartPanel data={monthly} />
      <ChartPanel data={weekly} />
    </Workspace>
  </Page>
);

export default App;
